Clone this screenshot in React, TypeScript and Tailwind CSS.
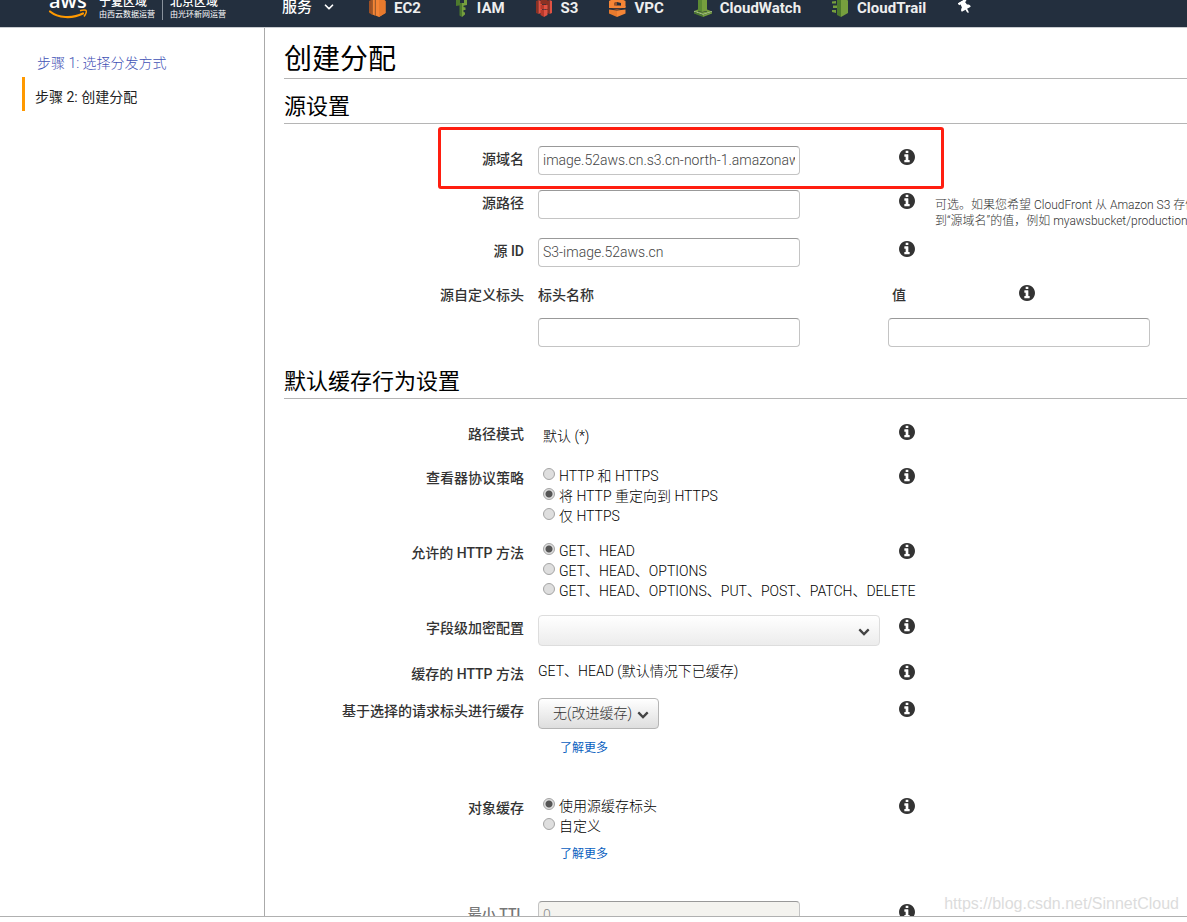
import { useState } from "react"
import type { ReactNode } from "react"
import { FaThumbtack } from "react-icons/fa"
import { ChevronDown } from "lucide-react"

const inputClass =
  "block h-[29px] w-[262px] rounded border border-[#c4c4c4] border-t-[#999] bg-white px-1 pb-0.5 text-sm font-light text-[#444] outline-none disabled:bg-[#f4f3ef] disabled:text-[#888]"

function AwsLogo() {
  return (
    <svg width="39" height="24" viewBox="0 0 39 24" aria-label="aws">
      <text x="1" y="13" fontFamily="Open Sans, sans-serif" fontWeight="600" fontSize="20" fill="#fff">
        aws
      </text>
      <path d="M2 16.500 C10 23 24 24 35 18.500" fill="none" stroke="#f90" strokeWidth="2.2" strokeLinecap="round" />
      <path d="M32 15.800 C35 14.800 38 15 38.200 15.600 C38.600 16.600 37.500 19.600 36 21.500" fill="none" stroke="#f90" strokeWidth="1.5" />
    </svg>
  )
}

function Ec2Icon() {
  return (
    <svg width="20" height="20" viewBox="0 0 20 20">
      <path d="M2 4 L5 2.5 V17.5 L2 16 Z" fill="#9d5025" />
      <path d="M5.5 2.5 L8 1.5 V18.5 L5.5 17.5 Z" fill="#f58536" />
      <path d="M8.5 1.5 L12 0 L18.500 4 V16 L12 20 L8.500 18.500 Z" fill="#f58536" />
      <path d="M12 0 L18.500 4 V16 L12 20 Z" fill="#e87a2d" />
      <path d="M5.200 2 V18 M8.200 1 V19" stroke="#b35f22" strokeWidth="0.8" />
    </svg>
  )
}

function IamIcon() {
  return (
    <svg width="20" height="20" viewBox="0 0 20 20">
      <path d="M6 3 L12 0 V8 L6 9 Z" fill="#4d7a2d" />
      <path d="M12 0 L17 3 V8 L12 9 Z" fill="#769f3e" />
      <rect x="10" y="3" width="4" height="3" fill="#232f3e" />
      <path d="M9.500 8 H12 V20 L9.500 18.500 Z" fill="#4d7a2d" />
      <path d="M12 8 H13.500 V10 L15.500 10.500 V13 L13.500 13 V15 L15 15.500 V17.500 L12 20 Z" fill="#769f3e" />
    </svg>
  )
}

function S3Icon() {
  return (
    <svg width="20" height="20" viewBox="0 0 20 20">
      <path d="M2 4 L4.500 3 V17 L2 16 Z" fill="#8c3123" />
      <path d="M4.500 3 L8 4.500 V15.500 L4.500 17 Z" fill="#e05243" />
      <path d="M18 4 L15.500 3 V17 L18 16 Z" fill="#e05243" />
      <path d="M15.500 3 L12 4.500 V15.500 L15.500 17 Z" fill="#8c3123" />
      <path d="M10 0 L13.500 2 V7 L10 7.500 L6.500 7 V2 Z" fill="#8c3123" />
      <path d="M6.500 8 H10 V12 L6.500 12 Z M6.500 13 L10 12.500 V20 L6.500 18 Z" fill="#b93a2b" />
      <path d="M10 8 H13.500 V12 H10 Z M10 12.500 L13.500 13 V18 L10 20 Z" fill="#e05243" />
    </svg>
  )
}

function VpcIcon() {
  return (
    <svg width="20" height="20" viewBox="0 0 20 20">
      <path d="M2 4 L10 0 V5 L7 6 V10 H2 Z" fill="#f58536" />
      <path d="M10 0 L18.500 4 V10 H14 V6 L10 5 Z" fill="#f58536" />
      <path d="M7 6 L10 5 V8 L7 9 Z" fill="#9d5025" />
      <path d="M2 9 L7 8.500 H12 L18.500 9 V11 H2 Z" fill="#f58536" />
      <path d="M2 12.500 L10 13.500 V20 L2 16.500 Z" fill="#e87a2d" />
      <path d="M10 13.500 L18.500 12.500 V16.500 L10 20 Z" fill="#f58536" />
      <path d="M5 11.800 H15 L10 13 Z" fill="#9d5025" />
    </svg>
  )
}

function CloudWatchIcon() {
  return (
    <svg width="20" height="20" viewBox="0 0 20 20">
      <path d="M5 2 L9 0 V15 L5 14 Z" fill="#5c8a34" />
      <path d="M9 0 L14 2 V14 L9 15 Z" fill="#769f3e" />
      <path d="M1 14 L5 12.500 V14.500 L9 15.500 L14 14.500 V12.500 L19 14.500 L10 17.500 Z" fill="#769f3e" />
      <path d="M1 14.300 L10 17.500 L19 14.500" fill="none" stroke="#c3d9a5" strokeWidth="0.8" />
      <path d="M1 14.800 L10 17.900 V20 L1 16.500 Z" fill="#4d7a2d" />
      <path d="M19 14.900 L10 17.900 V20 L19 16.500 Z" fill="#769f3e" />
    </svg>
  )
}

function CloudTrailIcon() {
  return (
    <svg width="20" height="20" viewBox="0 0 20 20">
      <path d="M7 2 L11 0 V20 L7 18 Z" fill="#4d7a2d" />
      <path d="M11 0 L18 3.500 V16 L11 20 Z" fill="#769f3e" />
      <path d="M2 4.500 L6 4 V6.500 H2 Z M3 8.500 H7 V11 H3 Z M2 13 H6 V16 L2 15 Z" fill="#769f3e" />
    </svg>
  )
}

const services = [
  { name: "EC2", icon: <Ec2Icon /> },
  { name: "IAM", icon: <IamIcon /> },
  { name: "S3", icon: <S3Icon /> },
  { name: "VPC", icon: <VpcIcon /> },
  { name: "CloudWatch", icon: <CloudWatchIcon /> },
  { name: "CloudTrail", icon: <CloudTrailIcon /> },
]

function Region({ name, operator }: { name: string; operator: string }) {
  return (
    <div className="flex flex-col text-white">
      <span className="text-[12px] leading-4 font-medium">{name}</span>
      <span className="text-[8px] leading-[10px]">{operator}</span>
    </div>
  )
}

function Header() {
  return (
    <header className="flex h-7 shrink-0 items-end overflow-hidden border-b border-[#c9ccd0] bg-[#232f3e] whitespace-nowrap">
      <div className="flex h-10 shrink-0 items-center pl-12">
        <a href="#" className="flex w-[234px] items-center">
          <AwsLogo />
          <div className="ml-3 flex gap-[7px]">
            <Region name="宁夏区域" operator="由西云数据运营" />
            <div className="w-px bg-[#8a929c]" />
            <Region name="北京区域" operator="由光环新网运营" />
          </div>
        </a>
        <button className="flex w-[85px] items-center gap-[10px] text-[15px] font-medium text-white">
          服务
          <ChevronDown size={14} strokeWidth={3} />
        </button>
        <nav className="flex items-center gap-[29px]">
          {services.map((service) => (
            <a key={service.name} href="#" className="flex items-center gap-[7px] text-[15px] font-bold text-[#eee]">
              {service.icon}
              <span className="pt-0.5">{service.name}</span>
            </a>
          ))}
          <button aria-label="固定" className="flex w-5 justify-center text-white">
            <FaThumbtack size={14} className="-rotate-30" />
          </button>
        </nav>
      </div>
    </header>
  )
}

function Sidebar() {
  return (
    <aside className="w-[265px] shrink-0 border-r border-[#aaa] pt-[21px] pl-[22px] text-sm">
      <a href="#" className="flex h-7 items-center pl-[15px] font-light text-[#3f51b5]">
        步骤 1: 选择分发方式
      </a>
      <div className="flex h-[34px] items-center border-l-3 border-[#f90] pt-[5px] pl-[10px] text-[#222]">
        步骤 2: 创建分配
      </div>
    </aside>
  )
}

function Info() {
  return (
    <button aria-label="信息" className="mt-[3px] block size-4 shrink-0 text-[#333]">
      <svg width="16" height="16" viewBox="0 128 1536 1536" fill="currentColor">
        <path d="M1024 1376v-160q0-14-9-23t-23-9h-96v-512q0-14-9-23t-23-9h-320q-14 0-23 9t-9 23v160q0 14 9 23t23 9h96v320h-96q-14 0-23 9t-9 23v160q0 14 9 23t23 9h448q14 0 23-9t9-23zm-128-896v-160q0-14-9-23t-23-9h-192q-14 0-23 9t-9 23v160q0 14 9 23t23 9h192q14 0 23-9t9-23zm640 416q0 209-103 385.500t-279.500 279.500-385.500 103-385.500-103-279.500-279.500-103-385.500 103-385.500 279.500-279.500 385.500-103 385.500 103 279.500 279.500 103 385.500z" />
      </svg>
    </button>
  )
}

function SelectArrow() {
  return (
    <svg
      width="12"
      height="12"
      viewBox="0 128 1792 1792"
      fill="currentColor"
      className="pointer-events-none absolute top-[11px] right-[10px] text-[#444]"
    >
      <path d="M1683 808l-742 741q-19 19-45 19t-45-19l-742-741q-19-19-19-45.500t19-45.500l166-165q19-19 45-19t45 19l531 531 531-531q19-19 45-19t45 19l166 165q19 19 19 45.500t-19 45.500z" />
    </svg>
  )
}

interface RowProps {
  label: string
  htmlFor?: string
  height: string
  muted?: boolean
  help?: ReactNode
  highlight?: boolean
  children: ReactNode
}

function Row({ label, htmlFor, height, muted, help, highlight, children }: RowProps) {
  const labelClass = `pt-[3px] text-right text-sm font-medium ${muted ? "text-[#777]" : "text-[#333]"}`
  return (
    <div className={`relative grid grid-cols-[240px_361px_30px_auto] ${height}`}>
      {htmlFor ? (
        <label htmlFor={htmlFor} className={labelClass}>
          {label}
        </label>
      ) : (
        <span className={labelClass}>{label}</span>
      )}
      <div className="ml-[14px]">{children}</div>
      <div className="ml-[14px]">
        <Info />
      </div>
      {help}
      {highlight && (
        <div className="pointer-events-none absolute -top-[19px] left-[154px] h-[62px] w-[506px] rounded-[3px] border-3 border-[#ff1e10]" />
      )}
    </div>
  )
}

function RadioGroup({ name, options, defaultIndex }: { name: string; options: string[]; defaultIndex: number }) {
  const [selected, setSelected] = useState(defaultIndex)

  return (
    <div className="flex flex-col pt-px pl-[5px]">
      {options.map((option, index) => (
        <label key={option} className="flex h-5 items-start gap-1 text-sm font-light whitespace-nowrap text-black">
          <input
            type="radio"
            name={name}
            checked={selected === index}
            onChange={() => setSelected(index)}
            className="mt-[2px] size-3 shrink-0 appearance-none rounded-full border border-[#a5a5a5] bg-[#dedede] checked:bg-[radial-gradient(circle,#555_0_3px,#dedede_4px)]"
          />
          {option}
        </label>
      ))}
    </div>
  )
}

function SectionTitle({ children }: { children: ReactNode }) {
  return <h2 className="mb-[22px] border-b border-[#b5b5b5] text-[22px] leading-8 text-black">{children}</h2>
}

function LearnMore() {
  return (
    <a href="#" className="ml-[22px] block w-fit text-xs text-[#0a5fc0]">
      了解更多
    </a>
  )
}

export default function App() {
  return (
    <div className="relative flex h-screen flex-col overflow-hidden bg-white font-['Roboto','Noto_Sans_CJK_SC',sans-serif]">
      <Header />
      <div className="flex min-h-0 flex-1 overflow-hidden border-b border-[#b0b0b0]">
        <Sidebar />
        <main className="min-w-0 flex-1 overflow-hidden pt-[14px] pl-[19px]">
          <h1 className="mb-3 border-b border-[#b5b5b5] text-[28px] leading-9 text-black">创建分配</h1>

          <section>
            <SectionTitle>源设置</SectionTitle>
            <Row label="源域名" htmlFor="origin-domain" height="h-11" highlight>
              <input id="origin-domain" className={inputClass} defaultValue="image.52aws.cn.s3.cn-north-1.amazonaws.com.cn" />
            </Row>
            <Row
              label="源路径"
              htmlFor="origin-path"
              height="h-12"
              help={
                <p className="pt-[7px] pl-5 text-xs leading-4 font-light whitespace-nowrap text-[#333]">
                  可选。如果您希望 CloudFront 从 Amazon S3 存储桶
                  <br />
                  到“源域名”的值，例如 myawsbucket/production
                </p>
              }
            >
              <input id="origin-path" className={inputClass} />
            </Row>
            <Row label="源 ID" htmlFor="origin-id" height="h-11">
              <input id="origin-id" className={inputClass} defaultValue="S3-image.52aws.cn" />
            </Row>
            <div className="grid grid-cols-[240px_350px_auto] gap-x-[14px] text-sm font-medium text-[#333]">
              <span className="h-9 pt-[3px] text-right">源自定义标头</span>
              <label htmlFor="header-name" className="h-9 pt-[3px]">
                标头名称
              </label>
              <div className="-ml-[14px] flex h-9">
                <label htmlFor="header-value" className="w-[131px] pt-[3px] pl-1">
                  值
                </label>
                <Info />
              </div>
              <input id="header-name" className={`col-start-2 ${inputClass}`} />
              <input id="header-value" className={`-ml-[14px] ${inputClass}`} />
            </div>
          </section>

          <section className="mt-[19px]">
            <SectionTitle>默认缓存行为设置</SectionTitle>
            <Row label="路径模式" height="h-11">
              <p className="pt-[5px] pl-[5px] text-sm font-light text-black">默认 (*)</p>
            </Row>
            <Row label="查看器协议策略" height="h-[75px]">
              <RadioGroup name="viewer-protocol" options={["HTTP 和 HTTPS", "将 HTTP 重定向到 HTTPS", "仅 HTTPS"]} defaultIndex={1} />
            </Row>
            <Row label="允许的 HTTP 方法" height="h-[75px]">
              <RadioGroup
                name="allowed-methods"
                options={["GET、HEAD", "GET、HEAD、OPTIONS", "GET、HEAD、OPTIONS、PUT、POST、PATCH、DELETE"]}
                defaultIndex={0}
              />
            </Row>
            <Row label="字段级加密配置" htmlFor="field-encryption" height="h-[46px]">
              <div className="relative w-[342px]">
                <select
                  id="field-encryption"
                  className="block h-[31px] w-full appearance-none rounded border border-[#ddd] bg-linear-to-b from-white to-[#ececec] px-[14px] text-sm"
                >
                  <option></option>
                </select>
                <SelectArrow />
              </div>
            </Row>
            <Row label="缓存的 HTTP 方法" height="h-[37px]">
              <p className="text-sm font-light text-black">GET、HEAD (默认情况下已缓存)</p>
            </Row>
            <Row label="基于选择的请求标头进行缓存" htmlFor="cache-headers" height="h-[97px]">
              <div className="relative mb-[11px] w-[121px]">
                <select
                  id="cache-headers"
                  className="block h-[31px] w-full appearance-none rounded border border-[#b5b5b5] bg-linear-to-b from-white to-[#dedede] pb-0.5 pl-[14px] text-sm font-light text-[#333]"
                >
                  <option>无(改进缓存)</option>
                </select>
                <SelectArrow />
              </div>
              <LearnMore />
            </Row>
            <Row label="对象缓存" height="h-[106px]">
              <div className="mb-[10px]">
                <RadioGroup name="object-caching" options={["使用源缓存标头", "自定义"]} defaultIndex={0} />
              </div>
              <LearnMore />
            </Row>
            <Row label="最小 TTL" htmlFor="min-ttl" height="h-11" muted>
              <input id="min-ttl" className={inputClass} defaultValue="0" disabled />
            </Row>
          </section>
        </main>
      </div>
      <div className="h-[5px] shrink-0" />
      <span className="pointer-events-none absolute right-2 bottom-[6px] font-['Liberation_Sans',sans-serif] text-base text-[#dcdcdc]">
        https://blog.csdn.net/SinnetCloud
      </span>
    </div>
  )
}
